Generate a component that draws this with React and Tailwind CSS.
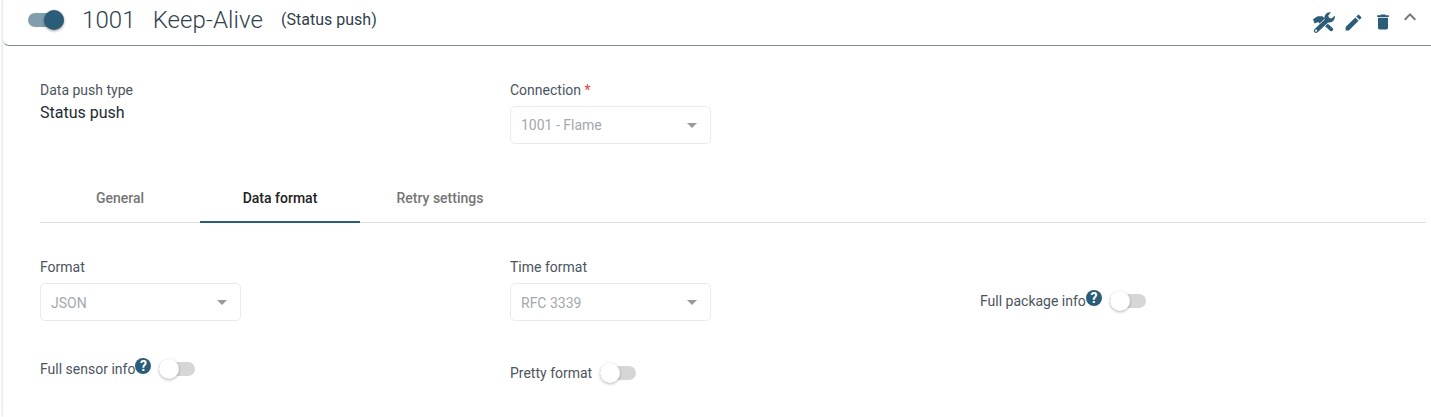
import React from "react";
import { MdEdit, MdDelete, MdExpandLess, MdArrowDropDown } from "react-icons/md";

const FONT = { fontFamily: "Roboto, sans-serif" };

function Tools() {
  return (
    <svg viewBox="0 0 21 20" className="w-[22px] h-[21px] mt-[4px] text-[#2c5d78]" fill="currentColor">
      <path d="M9 9L17.5 16.5" stroke="currentColor" strokeWidth="3.6" strokeLinecap="round" fill="none" />
      <path d="M0 7L4.5 4L9 4L13 7.5L8 13L5 9.5L1.5 11Z" />
      <path d="M14 7.5L3.5 17.5" stroke="#ffffff" strokeWidth="5.4" fill="none" />
      <path d="M14 7.5L3 17.8" stroke="currentColor" strokeWidth="4.2" strokeLinecap="round" fill="none" />
      <path d="M17.2 0.3A5.4 5.4 0 0 0 11 6.9L13.6 9.7A5.4 5.4 0 0 0 20.8 3.5L17.6 6.2L15.2 5.5L14.6 3.2Z" />
      <circle cx="2.9" cy="17.8" r="1" fill="#ffffff" />
    </svg>
  );
}

function Switch({ on }) {
  if (on) {
    return (
      <span className="relative block w-[36px] h-[14px] rounded-full bg-[#2c5d78]/60">
        <span className="absolute right-0 top-[-3px] w-[20px] h-[20px] rounded-full bg-[#2c5d78] shadow-[0_1px_3px_rgba(0,0,0,0.4)]" />
      </span>
    );
  }
  return (
    <span className="relative block w-[36px] h-[14px] rounded-full bg-[#d6d6d6]">
      <span className="absolute left-0 top-[-3px] w-[20px] h-[20px] rounded-full bg-white shadow-[0_1px_3px_rgba(0,0,0,0.3)]" />
    </span>
  );
}

function Help() {
  return (
    <span className="flex items-center justify-center w-[16px] h-[16px] rounded-full bg-[#2c5d78] text-white text-[14px] font-bold leading-none">?</span>
  );
}

function Select({ value, width, low }) {
  return (
    <div className={`flex items-center justify-between ${width} h-[38px] border border-[#e9ecef] rounded-[5px] pl-[10px] pr-[9px] bg-white`}>
      <span className={low ? "text-[14px] text-[#a4a8ac] translate-y-[1px]" : "text-[14px] text-[#a4a8ac]"}>{value}</span>
      <MdArrowDropDown className="w-[24px] h-[24px] text-[#9a9a9a] mr-[-3px] mb-[1px]" />
    </div>
  );
}

function Field({ label, required, children }) {
  return (
    <div className="flex flex-col">
      <span className="text-[14px] leading-[20px] text-[#4a5560]">
        {label}
        {required && <span className="text-[#f03a4a]"> *</span>}
      </span>
      {children}
    </div>
  );
}

export default function App() {
  return (
    <div style={FONT} className="w-[1431px] h-[417px] bg-white overflow-hidden">
      <div className="h-[417px] ml-[3px] shadow-[-1px_0_2px_rgba(0,0,0,0.12)] flex flex-col">
        <header className="h-[46px] shrink-0 flex items-center border-b border-[#7d8b95] rounded-bl-[6px] pl-[25px] pr-[9px] pb-[5px]">
          <Switch on />
          <span className="ml-[18px] text-[24px] font-light text-[#2f3f4c] tracking-[0.1px]">1001</span>
          <span className="ml-[17px] text-[24px] font-light text-[#2f3f4c] tracking-[0.1px]">Keep-Alive</span>
          <span className="ml-[18px] text-[16px] text-[#2f3f4c]">(Status push)</span>
          <div className="ml-auto flex items-center text-[#2c5d78]">
            <Tools />
            <MdEdit className="ml-[8px] mt-[4px] w-[21px] h-[21px]" />
            <MdDelete className="ml-[9px] mt-[4px] w-[20px] h-[20px]" />
            <MdExpandLess className="ml-[5px] mb-[6px] w-[24px] h-[24px] text-[#757575]" />
          </div>
        </header>

        <main className="pl-[37px] pr-[5px] flex flex-col">
          <section className="grid grid-cols-[470px_1fr] pt-[34px]">
            <Field label="Data push type">
              <span className="mt-[2px] text-[16px] leading-[22px] text-[#222b33]">Status push</span>
            </Field>
            <Field label="Connection" required>
              <div className="mt-[6px]"><Select value="1001 - Flame" width="w-[201px]" /></div>
            </Field>
          </section>

          <nav className="mt-[34px] flex h-[45px] border-b border-[#dcdfe1] text-[14px] font-medium">
            <span className="w-[160px] h-[45px] pb-[4px] flex items-center justify-center text-[#757575]">General</span>
            <span className="w-[160px] h-[45px] pb-[2px] flex items-center justify-center text-[#222222] border-b-2 border-[#2c5d78]">Data format</span>
            <span className="w-[160px] h-[45px] pb-[4px] flex items-center justify-center text-[#757575]">Retry settings</span>
          </nav>

          <section className="grid grid-cols-[470px_470px_1fr] pt-[34px]">
            <Field label="Format">
              <div className="mt-[6px]"><Select low value="JSON" width="w-[201px]" /></div>
            </Field>
            <Field label="Time format">
              <div className="mt-[6px]"><Select low value="RFC 3339" width="w-[201px]" /></div>
            </Field>
            <div className="flex items-center h-[38px] mt-[25px]">
              <span className="text-[14px] text-[#4a5560]">Full package info</span>
              <span className="mb-[6px]"><Help /></span>
              <span className="ml-[8px]"><Switch /></span>
            </div>
          </section>

          <section className="grid grid-cols-[470px_470px_1fr] pt-[36px]">
            <div className="flex items-center h-[24px]">
              <span className="text-[14px] text-[#4a5560]">Full sensor info</span>
              <span className="mb-[6px]"><Help /></span>
              <span className="ml-[8px]"><Switch /></span>
            </div>
            <div className="flex items-center h-[24px] mt-[4px]">
              <span className="text-[14px] text-[#4a5560]">Pretty format</span>
              <span className="ml-[8px]"><Switch /></span>
            </div>
          </section>
        </main>
      </div>
    </div>
  );
}
